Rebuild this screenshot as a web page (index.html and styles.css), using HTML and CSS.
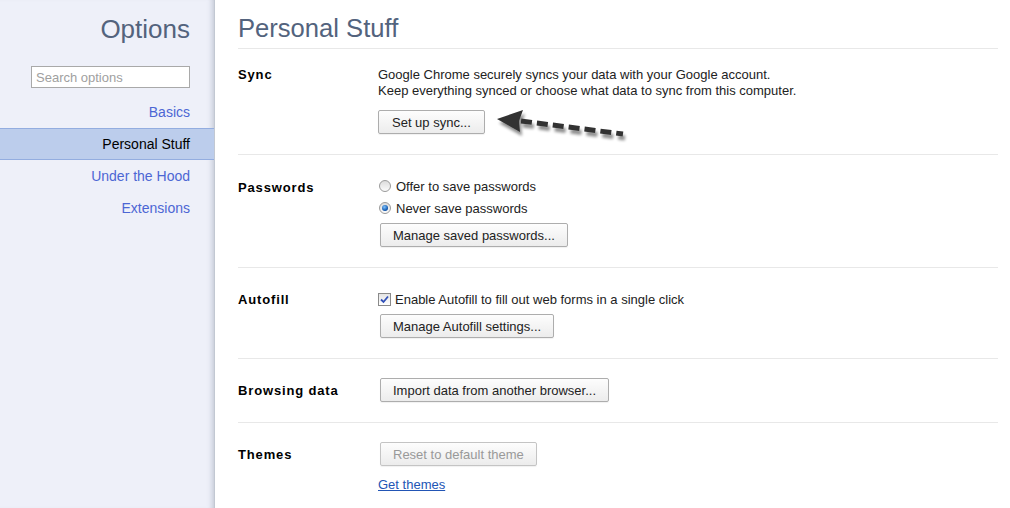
FILE: index.html
```html
<!DOCTYPE html>
<html>
<head>
<meta charset="utf-8">
<link rel="stylesheet" href="styles.css">
</head>
<body>
<div class="page">
  <aside class="sidebar">
    <h1 class="side-title">Options</h1>
    <div class="search-wrap"><input class="search" type="text" placeholder="Search options"></div>
    <nav class="nav">
      <div class="nav-item">Basics</div>
      <div class="nav-item selected">Personal Stuff</div>
      <div class="nav-item">Under the Hood</div>
      <div class="nav-item">Extensions</div>
    </nav>
  </aside>
  <main class="main">
    <h1 class="main-title">Personal Stuff</h1>

    <section class="section sync">
      <div class="label">Sync</div>
      <div class="content">
        <div class="sync-text">Google Chrome securely syncs your data with your Google account.<br>Keep everything synced or choose what data to sync from this computer.</div>
        <button class="btn btn-sync">Set up sync...</button>
      </div>
    </section>

    <section class="section">
      <div class="label">Passwords</div>
      <div class="content">
        <div class="row"><span class="radio"></span>Offer to save passwords</div>
        <div class="row"><span class="radio checked"></span>Never save passwords</div>
        <button class="btn btn-indent btn-after-row">Manage saved passwords...</button>
      </div>
    </section>

    <section class="section">
      <div class="label">Autofill</div>
      <div class="content">
        <div class="row"><span class="checkbox"><svg width="9" height="9" viewBox="0 0 9 9"><path d="M1 4.5 L3.5 7 L8 1.5" fill="none" stroke="#3050b8" stroke-width="1.8"/></svg></span>Enable Autofill to fill out web forms in a single click</div>
        <button class="btn btn-indent btn-after-row">Manage Autofill settings...</button>
      </div>
    </section>

    <section class="section">
      <div class="label">Browsing data</div>
      <div class="content">
        <button class="btn btn-indent">Import data from another browser...</button>
      </div>
    </section>

    <section class="section last">
      <div class="label">Themes</div>
      <div class="content">
        <button class="btn btn-indent" disabled>Reset to default theme</button>
        <a class="link" href="#">Get themes</a>
      </div>
    </section>

    <svg class="arrow" width="160" height="50" viewBox="490 100 160 50">
      <defs>
        <filter id="sh" x="-20%" y="-40%" width="140%" height="200%">
          <feGaussianBlur in="SourceAlpha" stdDeviation="1.6"/>
          <feOffset dx="2" dy="4" result="b"/>
          <feComponentTransfer><feFuncA type="linear" slope="0.45"/></feComponentTransfer>
          <feMerge><feMergeNode/><feMergeNode in="SourceGraphic"/></feMerge>
        </filter>
      </defs>
      <g filter="url(#sh)">
        <polygon points="497,119 523,110 519,121 520,132" fill="#333"/>
        <line x1="521" y1="121" x2="623" y2="134" stroke="#333" stroke-width="5" stroke-dasharray="11 5"/>
      </g>
    </svg>
  </main>
</div>
</body>
</html>
```

FILE: styles.css
```css
* { box-sizing: border-box; }
html, body { margin: 0; padding: 0; background: #fff; }
body {
  font-family: "Liberation Sans", Arial, sans-serif;
  font-size: 13px;
  color: #222;
  width: 1010px;
  height: 508px;
  overflow: hidden;
}
.page { display: flex; height: 508px; }

.sidebar {
  width: 215px;
  flex: none;
  background: #eef0f9;
  border-right: 1px solid #c2c8d2;
  box-shadow: inset -6px 0 5px -4px rgba(120, 130, 150, 0.35);
  padding-right: 24px;
  text-align: right;
}
.side-title {
  margin: 13px 0 0;
  font-size: 26px;
  line-height: 32px;
  font-weight: normal;
  color: #53637d;
}
.search-wrap { margin-top: 21px; display: flex; justify-content: flex-end; }
.search {
  width: 159px;
  height: 22px;
  border: 1px solid #a9a9a9;
  background: #fff;
  font-family: "Liberation Sans", Arial, sans-serif;
  font-size: 13px;
  padding: 0 4px;
  outline: none;
}
.search::placeholder { color: #a0a0a0; }
.nav { margin-top: 8px; margin-right: -24px; }
.nav-item {
  height: 32px;
  line-height: 32px;
  padding-right: 24px;
  font-size: 14px;
  color: #4c66d4;
}
.nav-item.selected {
  background: #bccdec;
  border-top: 1px solid #93ade0;
  border-bottom: 1px solid #93ade0;
  line-height: 30px;
  color: #000;
}

.main {
  position: relative;
  flex: 1;
  padding: 0 12px 0 23px;
}
.main-title {
  margin: 12px 0 0;
  padding-bottom: 4px;
  font-size: 25.6px;
  line-height: 32px;
  font-weight: normal;
  color: #53637d;
  border-bottom: 1px solid #e8e8e8;
}
.section {
  display: flex;
  align-items: baseline;
  padding: 19px 0 20px;
  border-bottom: 1px solid #e8e8e8;
}
.section.sync { padding-top: 18px; }
.section.last { border-bottom: none; }
.label {
  width: 140px;
  flex: none;
  font-weight: bold;
  font-size: 13px;
  letter-spacing: 0.85px;
  color: #000;
}
.content { display: flex; flex-direction: column; align-items: flex-start; }
.sync-text { line-height: 16px; color: #222; }
.row {
  height: 22px;
  display: flex;
  align-items: center;
  margin-top: 1px;
  margin-bottom: -1px;
}
.radio {
  width: 12px;
  height: 12px;
  border-radius: 50%;
  border: 1px solid #9a9a9a;
  background: linear-gradient(#dcdcdc, #fbfbfb);
  margin: 0 5px 0 1px;
  position: relative;
}
.radio.checked::after {
  content: "";
  position: absolute;
  left: 2px; top: 2px;
  width: 6px; height: 6px;
  border-radius: 50%;
  background: radial-gradient(circle at 40% 35%, #7fc4ff, #0a4fa6 70%);
}
.checkbox {
  width: 13px;
  height: 13px;
  border: 1px solid #8a8a8a;
  background: linear-gradient(#e4e4e4, #fff);
  margin-right: 4px;
  display: flex;
  align-items: center;
  justify-content: center;
}
.btn {
  height: 24px;
  padding: 0 12px;
  border: 1px solid #adadad;
  border-radius: 2px;
  background: linear-gradient(#fdfdfd, #ececec);
  font-family: "Liberation Sans", Arial, sans-serif;
  font-size: 13px;
  color: #222;
  box-shadow: 0 1px 1px rgba(0,0,0,0.06);
}
.btn-sync { margin-top: 11px; padding: 0 13px; }
.btn-indent { margin-left: 2px; }
.btn-after-row { margin-top: 5px; }
.btn:disabled { color: #999; border-color: #c4c4c4; }
.link {
  margin-top: 11px;
  color: #2255b5;
  text-decoration: underline;
  line-height: 15px;
}
.arrow {
  position: absolute;
  left: 275px;
  top: 100px;
}
```
